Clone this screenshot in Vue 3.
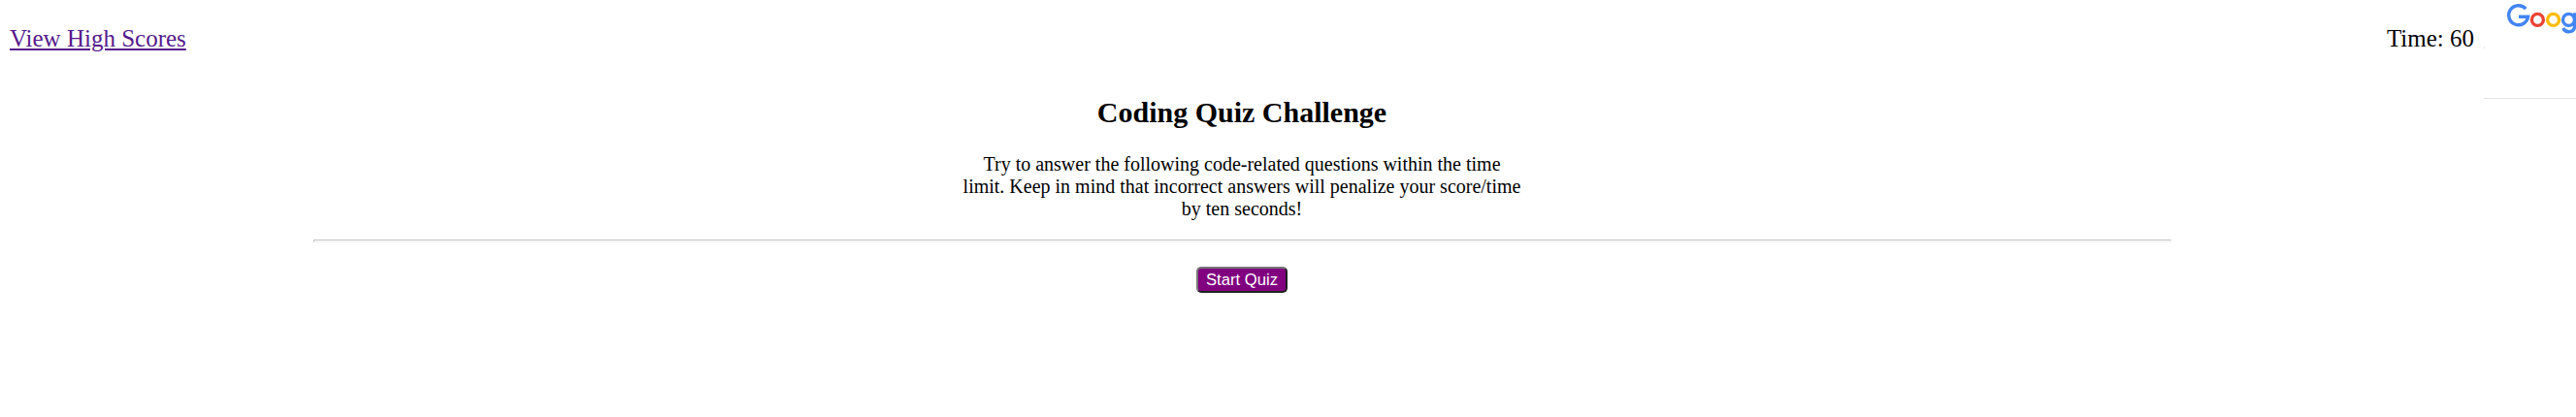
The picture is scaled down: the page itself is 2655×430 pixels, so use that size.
<script setup>
const timeLeft = 60
</script>

<template>
  <div class="screen">
    <div class="page">
      <header class="bar">
        <a class="scores" href="#">View High Scores</a>
        <span class="time">Time: {{ timeLeft }}</span>
      </header>
      <main class="quiz">
        <h1>Coding Quiz Challenge</h1>
        <p>Try to answer the following code-related questions within the time limit. Keep in mind that incorrect answers will penalize your score/time by ten seconds!</p>
        <hr />
        <button type="button">Start Quiz</button>
      </main>
    </div>
    <aside class="side">
      <svg class="logo" width="95" height="40" viewBox="2560 0 95 40" fill="none" stroke-width="3.4">
        <path stroke="#4285f4" d="M2603.3 9.2A10 10 0 1 0 2605.6 17.2H2596" />
        <circle stroke="#ea4335" cx="2615.4" cy="20.4" r="6" />
        <circle stroke="#fbbc05" cx="2631.6" cy="20.4" r="6" />
        <circle stroke="#4285f4" cx="2647.5" cy="20.4" r="6" />
        <path stroke="#4285f4" d="M2653.6 13.2V26.5C2653.6 34 2644.2 34.6 2641.8 29" />
      </svg>
      <i class="tick"></i>
    </aside>
  </div>
</template>

<style>
body { margin: 0; background: #fff; overflow: hidden; }
</style>

<style scoped>
.screen {
  display: flex;
  width: 2655px;
  height: 430px;
  overflow: hidden;
  font-family: "Liberation Serif", "Times New Roman", serif;
  color: #000;
}
.page { width: 2560px; flex: none; }
.bar {
  display: flex;
  justify-content: space-between;
  box-sizing: border-box;
  height: 78px;
  padding: 25px 10px 0;
  font-size: 25px;
  line-height: 29px;
}
.scores { color: #551a8b; text-decoration-thickness: 2px; text-underline-offset: 2px; }
.quiz {
  display: flex;
  flex-direction: column;
  align-items: center;
  width: 1916px;
  margin: 0 auto;
  text-align: center;
}
h1 { margin: 21px 0 0; font-size: 30px; line-height: 34px; }
p { width: 576px; margin: 25px 0 0; font-size: 20px; line-height: 23px; }
hr {
  box-sizing: border-box;
  width: 1915px;
  height: 3px;
  margin: 20px 0 25px 1px;
  border: 1px solid;
  border-color: #c0c0c0 #eee #eee #c0c0c0;
}
button {
  box-sizing: border-box;
  width: 94px;
  height: 27px;
  padding: 0;
  border: 2px solid;
  border-color: #767676 #212121 #212121 #767676;
  border-radius: 5px;
  background: purple;
  color: #fff;
  font: 16.67px/21px "Liberation Sans", Arial, sans-serif;
}
.side {
  position: relative;
  box-sizing: border-box;
  width: 95px;
  height: 102px;
  border-bottom: 1px solid #e4e5e7;
}
.logo { display: block; }
.tick { position: absolute; left: 0; top: 48px; width: 1px; height: 2px; background: #e4e5e7; }
</style>
